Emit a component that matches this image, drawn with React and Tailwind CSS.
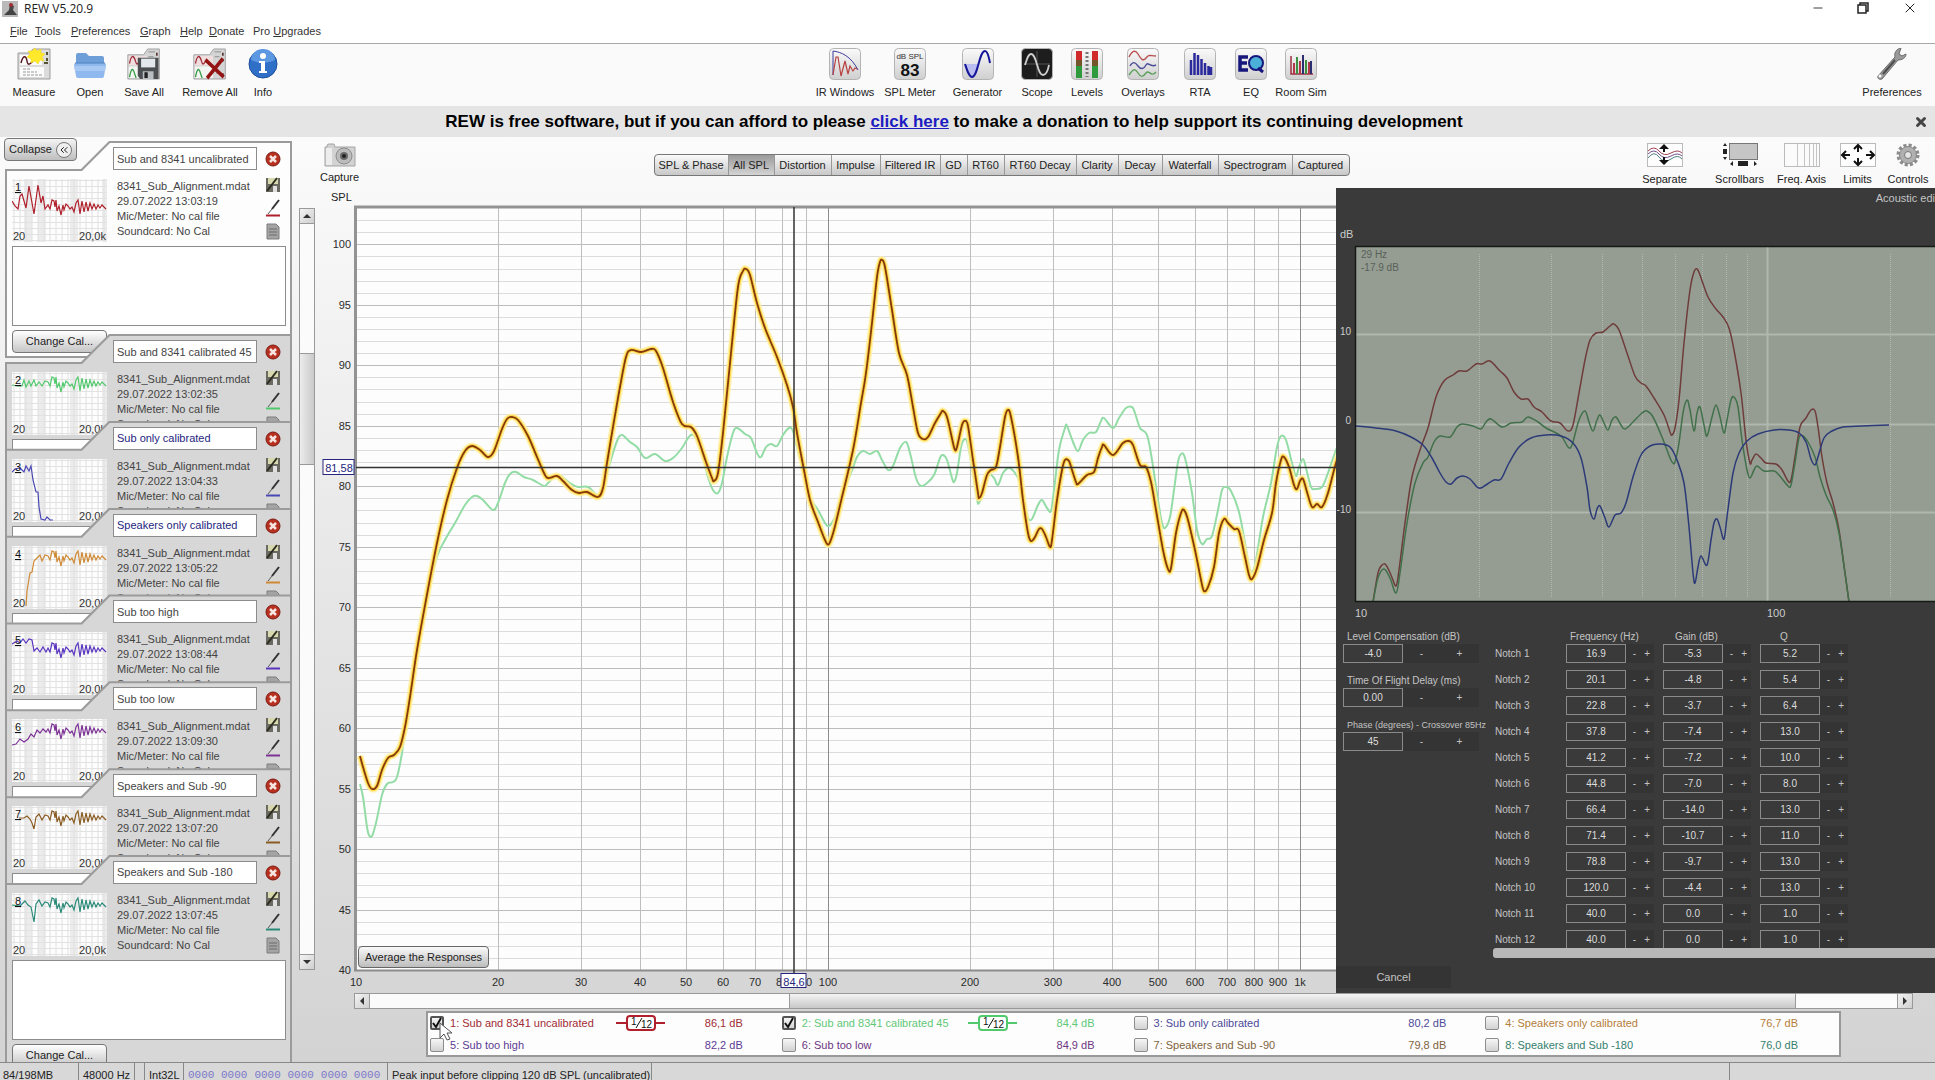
import React from 'react';
import { Minus, X, ChevronsLeft } from 'lucide-react';
import clsx from 'clsx';

const measurements = [
  { id: 1, name: 'Sub and 8341 uncalibrated', date: '29.07.2022 13:03:19', color: '#b0202c', text: 'text-[#a02c34]', level: '86,1 dB', smoothing: true, shift: 16, head: '0,22 3,27 6,30 8,17 10,15 14,29 17,7 22,35 26,6 29,24 31,17 33,30' },
  { id: 2, name: 'Sub and 8341 calibrated 45', date: '29.07.2022 13:02:35', color: '#52c96c', text: 'text-[#62c878]', level: '84,4 dB', smoothing: true, shift: 0, head: '0,13 6,14 10,14 12,8 14,15 17,9 19,14 22,8 24,14 27,10 30,14 33,9' },
  { id: 3, name: 'Sub only calibrated', date: '29.07.2022 13:04:33', color: '#4a48b4', text: 'text-[#4c4a98]', level: '80,2 dB', navy: true, head: '0,13 3,10 8,9 12,13 14,7 17,12 19,7 21,21 24,33 26,33 27,48 29,60 33,61 35,58 38,61 41,61' },
  { id: 4, name: 'Speakers only calibrated', date: '29.07.2022 13:05:22', color: '#cf8a35', text: 'text-[#b57e3c]', level: '76,7 dB', navy: true, shift: 0, head: '14,60 15,45 18,27 20,26 22,15 25,12 28,9 30,15 33,9' },
  { id: 5, name: 'Sub too high', date: '29.07.2022 13:08:44', color: '#5a35c0', text: 'text-[#5c3a94]', level: '82,2 dB', shift: 6, head: '0,12 5,9 8,11 11,7 14,11 17,7 20,8 22,19 25,16 28,20 31,15 34,20' },
  { id: 6, name: 'Sub too low', date: '29.07.2022 13:09:30', color: '#7d3396', text: 'text-[#6c3482]', level: '84,9 dB', shift: 0, head: '0,26 4,25 8,20 12,23 16,20 19,15 22,18 25,11 28,14 31,10 34,13' },
  { id: 7, name: 'Speakers and Sub -90', date: '29.07.2022 13:07:20', color: '#8a5c22', text: 'text-[#80633c]', level: '79,8 dB', shift: 0, head: '7,12 12,12 15,10 18,13 20,17 22,23 24,11 27,8 30,14 33,9' },
  { id: 8, name: 'Speakers and Sub -180', date: '29.07.2022 13:07:45', color: '#2a8a78', text: 'text-[#34806e]', level: '76,0 dB', shift: 0, head: '0,12 8,13 13,8 16,12 19,14 22,29 24,11 27,7 30,13 33,9' }
];

// High frequency part is nearly the same in every thumbnail
const thumbTail = [
  [36, 10], [38, 14], [40, 5], [42, 6], [43, 12], [44, 5], [45, 16], [47, 11], [49, 20], [51, 10], [52, 15], [54, 9],
  [56, 11], [58, 14], [60, 12], [62, 17], [64, 8], [66, 5], [68, 19], [70, 6], [72, 17], [74, 7], [76, 16], [78, 8],
  [80, 14], [82, 9], [84, 14], [86, 10], [88, 13], [90, 10], [94, 14]
];

const uncalibratedCurve = [
  [40, 566], [43, 577], [48, 593], [52, 599], [57, 596], [62, 580], [68, 568], [74, 565], [80, 557], [85, 537], [90, 507],
  [97, 460], [106, 410], [117, 353], [127, 310], [137, 278], [145, 261], [152, 256], [160, 260], [168, 267], [174, 261],
  [182, 239], [187, 229], [192, 227], [198, 230], [208, 246], [217, 267], [224, 283], [228, 288], [237, 286], [243, 291],
  [252, 300], [259, 303], [267, 302], [278, 307], [283, 298], [287, 273], [293, 237], [300, 197], [306, 167], [311, 160],
  [321, 162], [331, 159], [336, 161], [343, 178], [353, 212], [362, 234], [371, 237], [377, 246], [386, 272], [392, 288],
  [394, 291], [398, 283], [403, 243], [411, 163], [418, 97], [423, 81], [426, 79], [430, 85], [437, 113], [445, 138],
  [457, 167], [467, 195], [473, 217], [477, 243], [484, 280], [490, 310], [498, 332], [505, 350], [509, 354], [514, 340],
  [522, 307], [533, 260], [541, 213], [546, 183], [552, 133], [557, 87], [560, 72], [562, 70], [565, 77], [572, 120],
  [579, 163], [587, 185], [593, 217], [598, 243], [603, 249], [608, 247], [615, 233], [621, 223], [623, 221], [627, 227],
  [633, 253], [635, 260], [637, 257], [642, 235], [645, 231], [648, 236], [653, 270], [658, 303], [659, 308], [662, 303],
  [667, 285], [671, 280], [676, 277], [680, 257], [685, 227], [688, 220], [691, 227], [698, 267], [703, 310], [708, 343],
  [711, 351], [715, 347], [719, 339], [722, 339], [726, 347], [730, 357], [732, 350], [737, 310], [742, 280], [745, 270],
  [749, 271], [752, 280], [756, 292], [758, 294], [767, 285], [774, 282], [778, 268], [782, 257], [784, 255], [793, 265],
  [803, 253], [809, 251], [813, 255], [820, 275], [826, 277], [831, 292], [836, 320], [843, 360], [848, 379], [851, 378],
  [856, 343], [861, 323], [864, 320], [868, 330], [875, 360], [881, 390], [884, 401], [888, 397], [894, 377], [899, 343],
  [904, 329], [908, 333], [914, 339], [919, 341], [925, 367], [929, 385], [932, 389], [937, 378], [944, 350], [952, 323],
  [956, 293], [961, 270], [964, 267], [969, 277], [974, 295], [977, 299], [980, 291], [983, 289], [987, 302], [992, 317],
  [997, 314], [1002, 317], [1008, 303], [1016, 273], [1024, 250]
];

const calibratedCurve = [
  [40, 594], [43, 607], [47, 637], [49, 645], [52, 646], [56, 633], [62, 605], [67, 594], [73, 592], [77, 587], [82, 563],
  [85, 540], [90, 510], [97, 463], [106, 413], [117, 367], [125, 350], [135, 333], [145, 315], [152, 307], [157, 306],
  [163, 310], [173, 320], [178, 313], [185, 293], [190, 284], [196, 282], [204, 287], [213, 290], [224, 296], [228, 293],
  [238, 285], [250, 293], [258, 297], [268, 297], [277, 305], [282, 300], [290, 273], [297, 251], [302, 245], [310, 252],
  [317, 257], [325, 268], [335, 264], [345, 271], [353, 268], [362, 258], [368, 248], [373, 245], [380, 257], [388, 287],
  [393, 300], [398, 303], [402, 293], [407, 267], [413, 243], [417, 238], [425, 244], [431, 248], [437, 263], [441, 267],
  [446, 257], [451, 254], [457, 256], [463, 245], [469, 238], [473, 241], [477, 257], [484, 283], [490, 307], [498, 320],
  [505, 333], [509, 336], [515, 327], [521, 307], [531, 283], [537, 267], [543, 261], [550, 264], [557, 261], [562, 270],
  [568, 280], [573, 276], [580, 258], [586, 252], [590, 263], [596, 288], [601, 296], [607, 293], [614, 285], [620, 268],
  [623, 265], [627, 270], [632, 288], [634, 292], [637, 283], [641, 257], [645, 249], [648, 255], [653, 283], [657, 309],
  [659, 313], [664, 300], [669, 285], [674, 288], [678, 295], [683, 283], [689, 278], [695, 283], [700, 293], [705, 315],
  [708, 328], [712, 329], [718, 315], [722, 310], [727, 318], [731, 321], [734, 300], [739, 260], [745, 238], [747, 236],
  [753, 252], [758, 261], [763, 250], [769, 243], [776, 242], [781, 231], [784, 228], [793, 238], [799, 228], [806, 218],
  [812, 217], [815, 223], [820, 238], [827, 245], [832, 270], [838, 310], [842, 333], [845, 338], [850, 327], [854, 300],
  [858, 272], [861, 264], [865, 268], [872, 303], [877, 340], [882, 354], [887, 349], [892, 346], [898, 320], [902, 300],
  [906, 297], [911, 301], [919, 322], [925, 353], [930, 380], [935, 375], [943, 327], [951, 293], [957, 257], [961, 246],
  [966, 250], [972, 273], [976, 286], [979, 277], [983, 269], [986, 278], [991, 297], [995, 299], [1002, 297], [1008, 283],
  [1016, 260], [1024, 240]
];

const editorResponse = [
  [37, 414], [42, 385], [46, 377], [50, 377], [55, 387], [60, 398], [63, 382], [69, 335], [76, 289], [85, 259], [92, 240],
  [100, 209], [108, 193], [117, 187], [123, 183], [131, 183], [140, 176], [146, 176], [154, 173], [164, 183], [171, 190],
  [178, 204], [185, 211], [192, 211], [198, 219], [206, 224], [215, 233], [224, 235], [232, 243], [237, 237], [243, 205],
  [249, 172], [254, 152], [260, 145], [267, 144], [274, 138], [278, 136], [283, 142], [291, 165], [299, 188], [305, 195],
  [310, 198], [318, 210], [328, 227], [334, 244], [336, 247], [339, 240], [343, 212], [348, 155], [354, 102], [358, 84],
  [361, 81], [364, 87], [372, 109], [380, 121], [387, 129], [393, 140], [398, 162], [405, 205], [410, 252], [414, 275],
  [416, 272], [420, 266], [425, 270], [430, 275], [440, 276], [446, 282], [452, 293], [455, 292], [459, 269], [464, 239],
  [470, 230], [475, 222], [479, 223], [482, 239], [486, 269], [491, 295], [497, 315], [503, 342], [509, 385], [513, 414]
];

const editorResult = [
  [37, 414], [42, 390], [48, 381], [54, 390], [60, 405], [64, 385], [71, 335], [79, 295], [87, 275], [92, 269], [98, 254],
  [104, 248], [114, 249], [121, 239], [126, 236], [137, 238], [145, 241], [150, 234], [155, 231], [166, 239], [175, 235],
  [186, 234], [192, 229], [202, 234], [210, 240], [225, 248], [232, 259], [236, 257], [243, 232], [249, 223], [253, 234],
  [257, 243], [261, 232], [264, 227], [268, 235], [272, 242], [276, 232], [280, 229], [285, 237], [289, 241], [297, 234],
  [306, 225], [311, 223], [317, 229], [326, 249], [334, 270], [337, 275], [339, 274], [343, 255], [347, 225], [351, 212],
  [354, 222], [358, 243], [361, 225], [364, 219], [368, 237], [371, 248], [376, 229], [380, 217], [384, 229], [388, 245],
  [391, 232], [395, 212], [398, 209], [402, 219], [406, 252], [411, 282], [414, 290], [418, 282], [421, 278], [428, 283],
  [438, 283], [443, 287], [452, 298], [455, 297], [459, 275], [463, 250], [467, 248], [472, 254], [479, 269], [484, 289],
  [490, 307], [497, 322], [503, 345], [509, 385], [513, 414]
];

const editorFilter = [
  [19, 238], [40, 240], [60, 243], [75, 249], [87, 257], [96, 270], [104, 285], [110, 294], [115, 296], [121, 290],
  [127, 288], [134, 291], [141, 299], [145, 300], [150, 297], [158, 292], [165, 291], [173, 275], [183, 259], [195, 250],
  [210, 247], [225, 248], [237, 255], [245, 270], [251, 299], [254, 322], [258, 331], [261, 321], [264, 318], [269, 330],
  [273, 339], [279, 327], [285, 325], [290, 315], [297, 289], [305, 267], [314, 258], [324, 256], [334, 259], [341, 272],
  [348, 295], [353, 339], [357, 385], [359, 395], [362, 379], [365, 368], [371, 377], [375, 352], [378, 335], [381, 331],
  [384, 339], [388, 351], [391, 329], [397, 285], [403, 265], [411, 253], [422, 246], [438, 242], [453, 242], [463, 245],
  [470, 254], [475, 271], [479, 277], [482, 269], [488, 250], [496, 243], [507, 239], [526, 238], [553, 237]
];

// Catmull-Rom spline through the points
const smooth = (pts) => {
  let d = `M${pts[0][0]} ${pts[0][1]}`;
  for (let i = 0; i < pts.length - 1; i++) {
    const p0 = pts[i - 1] || pts[i];
    const p1 = pts[i];
    const p2 = pts[i + 1];
    const p3 = pts[i + 2] || p2;
    const c = [
      p1[0] + (p2[0] - p0[0]) / 6, p1[1] + (p2[1] - p0[1]) / 6,
      p2[0] - (p3[0] - p1[0]) / 6, p2[1] - (p3[1] - p1[1]) / 6
    ].map((v) => v.toFixed(1));
    d += `C${c[0]} ${c[1]} ${c[2]} ${c[3]} ${p2[0]} ${p2[1]}`;
  }
  return d;
};

const notches = [
  ['16.9', '-5.3', '5.2'],
  ['20.1', '-4.8', '5.4'],
  ['22.8', '-3.7', '6.4'],
  ['37.8', '-7.4', '13.0'],
  ['41.2', '-7.2', '10.0'],
  ['44.8', '-7.0', '8.0'],
  ['66.4', '-14.0', '13.0'],
  ['71.4', '-10.7', '11.0'],
  ['78.8', '-9.7', '13.0'],
  ['120.0', '-4.4', '13.0'],
  ['40.0', '0.0', '1.0'],
  ['40.0', '0.0', '1.0']
];

/* ---------- icons ---------- */

const Tile = ({ children, dark }) => (
  <svg width="32" height="32" viewBox="0 0 32 32">
    <defs>
      <linearGradient id="tile" x1="0" y1="0" x2="0" y2="1">
        <stop offset="0" stopColor="#fafafa" />
        <stop offset="1" stopColor="#cfcfcf" />
      </linearGradient>
    </defs>
    <rect x="0.5" y="0.5" width="31" height="31" rx="4" fill={dark ? '#1d1d1d' : 'url(#tile)'} stroke="#b4b4b4" />
    {children}
  </svg>
);

const SheetBase = () => (
  <>
    <path d="M1 7h19l5-6h14v31H1z" fill="#d4d4d4" stroke="#9c9c9c" />
    <path d="M2 8h22v10H2z" fill="#f0dede" />
    <path d="M2 19h22v12H2z" fill="#f2f5f2" />
    <path d="M3 16c2-9 5-9 7-3s3 3 5 1" fill="none" stroke="#9c2a36" strokeWidth="1.5" />
    <path d="M3 30c2-9 4-10 6-4l2 5" fill="none" stroke="#2e9a3e" strokeWidth="1.5" />
    <path d="M26 4h8M26 9h6M28 26h6" stroke="#888" />
    <path d="M36 5v3M36 11v3M36 26v4" stroke="#5a3434" strokeWidth="2" />
  </>
);

const MeasureIcon = () => (
  <svg width="34" height="32" viewBox="0 0 34 32">
    <path d="M1 5h12l3-4h17v30H1z" fill="#dcdcdc" stroke="#9c9c9c" />
    <path d="M3 19h24v10H3zM3 7h22v10H3z" fill="#fbfbfb" />
    <path d="M4 15c2-8 5-8 6-2s4 2 6 0" fill="none" stroke="#5a1c24" strokeWidth="1.5" />
    <path d="M6 21h7M6 24h14M6 27h20" stroke="#999" strokeDasharray="3 1" />
    <path d="M30 4v3M30 10v3M27 15h4" stroke="#553" strokeWidth="2" />
    <path d="M18 0l2 3 4-2 0 4 4 1-3 3 2 4-4-1-2 4-3-3-4 2 0-4-4-2 3-3-2-3 4 0z" fill="#ffe92a" stroke="#f2d21a" strokeWidth="0.5" />
  </svg>
);

const OpenIcon = () => (
  <svg width="34" height="32" viewBox="0 0 34 32">
    <path d="M3 7q0-2 2-2h8l3 3h13q2 0 2 2v8H3z" fill="#6f9fd8" />
    <path d="M1 17q0-2 2-2h28q2 0 2 2l-2 11q0 2-2 2H5q-2 0-2-2z" fill="#8fb8ee" />
    <path d="M1 18h32l-1 5H2z" fill="#a9c9f5" />
    <path d="M2 15h30" stroke="#4f80c0" />
  </svg>
);

const SaveAllIcon = () => (
  <svg width="34" height="32" viewBox="0 0 41 33" preserveAspectRatio="none">
    <SheetBase />
    <path d="M13 10h25v22H16l-3-3z" fill="#4b4f52" />
    <path d="M17 11h17v9H17z" fill="#e3e8ec" />
    <path d="M19 24h13v8H19z" fill="#b9bec2" />
    <path d="M21 25h4v6h-4z" fill="#222" />
  </svg>
);

const RemoveAllIcon = () => (
  <svg width="34" height="32" viewBox="0 0 41 33" preserveAspectRatio="none">
    <SheetBase />
    <path d="M15 12l22 18M36 11L17 31" stroke="#941414" strokeWidth="4" />
  </svg>
);

const InfoIcon = () => (
  <svg width="30" height="32" viewBox="0 0 30 32">
    <ellipse cx="15" cy="16" rx="14" ry="14" fill="#2f6fc8" stroke="#1e4f9c" />
    <path d="M3 12a12 11 0 0 1 24 0q-12 6-24 0z" fill="#5c97e2" />
    <circle cx="15" cy="8" r="3" fill="#fff" />
    <path d="M11 13h6v10h2v2h-8v-2h2v-8h-2z" fill="#fff" />
  </svg>
);

const IrIcon = () => (
  <Tile>
    <path d="M4 27V3c8 1 18 5 25 19" fill="none" stroke="#3c3c9c" />
    <path d="M4 27L7 9l2 0 3 19 4-15 3 13 2-8 3 5 2-3 2 1" fill="none" stroke="#b84040" strokeWidth="1.2" />
  </Tile>
);

const SplIcon = () => (
  <Tile>
    <text x="16" y="11" fontSize="8" textAnchor="middle" fill="#333">dB SPL</text>
    <text x="16" y="28" fontSize="17" fontWeight="bold" textAnchor="middle" fill="#111">83</text>
  </Tile>
);

const GeneratorIcon = () => (
  <Tile>
    <path d="M3 16c2 6 4 13 7 13s5-7 7-13z" fill="#b9bdf0" />
    <path d="M3 16c2 6 4 13 7 13 6 0 7-26 13-26 3 0 4 7 5 12" fill="none" stroke="#15159c" strokeWidth="2" />
  </Tile>
);

const ScopeIcon = () => (
  <Tile dark>
    <path d="M16 3v26M3 16h26" stroke="#555" />
    <path d="M4 17c2-6 3-11 6-11 6 0 6 21 12 21 3 0 5-5 6-10" fill="none" stroke="#cfcfcf" strokeWidth="1.8" />
  </Tile>
);

const LevelsIcon = () => (
  <Tile>
    <path d="M5 3h6v14H5zM21 3h6v14h-6z" fill="#d02a2a" />
    <path d="M5 15h6v15H5zM21 15h6v15h-6z" fill="#2f9a3c" />
    <path d="M5 12h6v6H5zM21 12h6v6h-6z" fill="#74542a" />
    <path d="M16 4v25" stroke="#777" strokeWidth="3" strokeDasharray="2 2" />
  </Tile>
);

const OverlaysIcon = () => (
  <Tile>
    <path d="M2 9c3-6 6-8 9-3s5 8 8 4 4-2 10-2" fill="none" stroke="#b85050" strokeWidth="1.4" />
    <path d="M3 18c3-5 5-4 8 0s6 3 8-1 4 3 10 0" fill="none" stroke="#4c4c98" strokeWidth="1.4" />
    <path d="M2 27c4-6 6-7 9-2s5 4 8 0 5 5 10-1" fill="none" stroke="#5aa05a" strokeWidth="1.4" />
  </Tile>
);

const RtaIcon = () => (
  <Tile>
    <path d="M7 27V12M10.500 27V5M14 27V7M17.500 27V11M21 27V15M24.500 27V18M27 27V19" stroke="#2a2a9c" strokeWidth="2.500" />
  </Tile>
);

const EqIcon = () => (
  <Tile>
    <circle cx="21" cy="15" r="7" fill="#4ab0d8" stroke="#16167c" strokeWidth="2" />
    <path d="M23 20l5 4" stroke="#16167c" strokeWidth="3" />
    <path d="M13 9H5v13h8M5 15h7" fill="none" stroke="#16167c" strokeWidth="3.500" />
  </Tile>
);

const RoomSimIcon = () => (
  <Tile>
    <path d="M6 8v18h22" fill="none" stroke="#a03040" strokeWidth="1.500" />
    <path d="M9 26V15M15 26V13M24 26V14" stroke="#b03848" strokeWidth="2" />
    <path d="M12 26V9M21 26V12" stroke="#3c9040" strokeWidth="2" />
    <path d="M18 26V7M26 26V13" stroke="#2c2c70" strokeWidth="2" />
  </Tile>
);

const WrenchIcon = () => (
  <svg width="32" height="32" viewBox="0 0 32 32">
    <path d="M25 0c-5 1-7 5-6 9L2 28c-1 2 1 4 4 3L22 12c4 0 8-2 8-6l-4 2-3-2 1-3z" fill="#9a9a9a" stroke="#6c6c6c" />
    <path d="M19 12L7 26" stroke="#4c4c4c" strokeWidth="2" />
    <circle cx="4" cy="28" r="1.500" fill="#fff" />
  </svg>
);

const CameraIcon = () => (
  <svg width="32" height="24" viewBox="0 0 32 24">
    <path d="M3 3q0-2 2-2h5l1 3h20v19H1V4h2z" fill="#d2d2d2" stroke="#a4a4a4" />
    <path d="M2 5h6v17H2z" fill="#ededed" />
    <circle cx="20" cy="13" r="8" fill="#bcbcbc" stroke="#8e8e8e" />
    <circle cx="20" cy="13" r="4" fill="#6a6a6a" />
    <circle cx="20" cy="13" r="2" fill="#222" />
  </svg>
);

const SeparateIcon = () => (
  <svg width="36" height="24" viewBox="0 0 36 24">
    <rect x="0.5" y="0.5" width="35" height="23" fill="#fdfdfd" stroke="#bbb" />
    <path d="M1 8q6-6 11 0t12 2 11 0" fill="none" stroke="#a04050" />
    <path d="M1 11q6-6 11 0t12 2 11 0" fill="none" stroke="#705090" />
    <path d="M1 15q6-8 11-1t12 2 11 0" fill="none" stroke="#508080" />
    <path d="M17 1l5 5h-4v3h-2V6h-4zM17 22l5-5h-4v-3h-2v3h-4z" fill="#111" />
  </svg>
);

const ScrollbarsIcon = () => (
  <svg width="36" height="24" viewBox="0 0 36 24">
    <rect x="7.500" y="0.500" width="28" height="16" fill="#c6c6c6" stroke="#777" />
    <path d="M3 0l2 3H1zM3 17l2-3H1zM1 6h4v5H1zM16 18h10v5H16zM11 18v5l-3-2zM32 18v5l3-2z" fill="#222" />
  </svg>
);

const FreqAxisIcon = () => (
  <svg width="36" height="24" viewBox="0 0 36 24">
    <rect x="0.500" y="0.500" width="35" height="23" fill="#fbfbfb" stroke="#bbb" />
    <path d="M13.500 1v22M20.500 1v22M25.500 1v22M29.500 1v22M32.500 1v22" stroke="#c4c4c4" />
  </svg>
);

const LimitsIcon = () => (
  <svg width="36" height="24" viewBox="0 0 36 24">
    <rect x="0.500" y="0.500" width="35" height="23" fill="#fdfdfd" stroke="#bbb" />
    <path d="M18 2v7M18 15v7M3 12h7M33 12h-7" stroke="#111" strokeWidth="2" />
    <path d="M14 6l4-4 4 4M14 18l4 4 4-4M6 8l-4 4 4 4M30 8l4 4-4 4" fill="none" stroke="#111" strokeWidth="2" />
  </svg>
);

const GearIcon = () => (
  <svg width="24" height="24" viewBox="0 0 24 24">
    <circle cx="12" cy="12" r="9.500" fill="none" stroke="#8c8c8c" strokeWidth="4" strokeDasharray="3 2" />
    <circle cx="12" cy="12" r="8.500" fill="#b0b0b0" stroke="#888" />
    <circle cx="12" cy="12" r="3.500" fill="#e6e6e6" stroke="#777" />
  </svg>
);

const RemoveIcon = () => (
  <svg width="16" height="16" viewBox="0 0 16 16">
    <circle cx="8" cy="8" r="7" fill="#b83020" stroke="#7c1c14" />
    <path d="M5 5l6 6M11 5l-6 6" stroke="#f6e6e2" strokeWidth="2.500" />
  </svg>
);

const DiskPenIcon = () => (
  <svg width="16" height="16" viewBox="0 0 16 16">
    <path d="M1 1h14v14H1z" fill="#6a6a62" />
    <path d="M3 1h10v6H3z" fill="#d8d8ae" />
    <path d="M8 9h4v6H8z" fill="#e0e0e0" />
    <path d="M2 14L12 1" stroke="#2c2c20" strokeWidth="2" />
  </svg>
);

const TraceColourIcon = ({ color }) => (
  <svg width="16" height="18" viewBox="0 0 16 18">
    <path d="M14 1L7 10" stroke="#333" strokeWidth="2" />
    <path d="M7 10l-4 5" stroke="#555" />
    <path d="M1 16.500h14" stroke={color} strokeWidth="2" />
  </svg>
);

const NotesIcon = () => (
  <svg width="14" height="17" viewBox="0 0 14 17">
    <path d="M1 1h9l3 3v12H1z" fill="#a4a4a4" stroke="#7c7c7c" />
    <path d="M3 6h8M3 9h8M3 12h8" stroke="#6a6a6a" />
  </svg>
);

const RewLogo = () => (
  <svg width="16" height="16" viewBox="0 0 16 16">
    <rect width="16" height="16" fill="#b9b9b9" />
    <path d="M2 14l5-5 1-6 4 2-1 4 4 5z" fill="#444" />
    <circle cx="9" cy="4" r="2" fill="#a02c34" />
  </svg>
);

/* ---------- top bars ---------- */

const menus = [
  { key: 'F', rest: 'ile', width: 'w-[25px]' },
  { key: 'T', rest: 'ools', width: 'w-9' },
  { key: 'P', rest: 'references', width: 'w-[69px]' },
  { key: 'G', rest: 'raph', width: 'w-10' },
  { key: 'H', rest: 'elp', width: 'w-[29px]' },
  { key: 'D', rest: 'onate', width: 'w-11' },
  { before: 'Pro ', key: 'U', rest: 'pgrades', width: 'w-20' }
];

const fileTools = [
  { label: 'Measure', icon: MeasureIcon, width: 'w-[60px]' },
  { label: 'Open', icon: OpenIcon, width: 'w-[52px]' },
  { label: 'Save All', icon: SaveAllIcon, width: 'w-14' },
  { label: 'Remove All', icon: RemoveAllIcon, width: 'w-[76px]' },
  { label: 'Info', icon: InfoIcon, width: 'w-[30px]' }
];

const mainTools = [
  { label: 'IR Windows', icon: IrIcon, width: 'w-16' },
  { label: 'SPL Meter', icon: SplIcon, width: 'w-[66px]' },
  { label: 'Generator', icon: GeneratorIcon, width: 'w-[69px]' },
  { label: 'Scope', icon: ScopeIcon, width: 'w-[50px]' },
  { label: 'Levels', icon: LevelsIcon, width: 'w-[50px]' },
  { label: 'Overlays', icon: OverlaysIcon, width: 'w-[62px]' },
  { label: 'RTA', icon: RtaIcon, width: 'w-[52px]' },
  { label: 'EQ', icon: EqIcon, width: 'w-[50px]' },
  { label: 'Room Sim', icon: RoomSimIcon, width: 'w-[50px]' }
];

const graphTools = [
  { label: 'Separate', icon: SeparateIcon, width: 'w-[81px]' },
  { label: 'Scrollbars', icon: ScrollbarsIcon, width: 'w-[69px]' },
  { label: 'Freq. Axis', icon: FreqAxisIcon, width: 'w-[55px]' },
  { label: 'Limits', icon: LimitsIcon, width: 'w-[57px]' },
  { label: 'Controls', icon: GearIcon, width: 'w-11' }
];

const tabs = [
  { label: 'SPL & Phase', width: 'w-[74px]' },
  { label: 'All SPL', width: 'w-[46px]' },
  { label: 'Distortion', width: 'w-[57px]' },
  { label: 'Impulse', width: 'w-[49px]' },
  { label: 'Filtered IR', width: 'w-[60px]' },
  { label: 'GD', width: 'w-[27px]' },
  { label: 'RT60', width: 'w-[37px]' },
  { label: 'RT60 Decay', width: 'w-[72px]' },
  { label: 'Clarity', width: 'w-[42px]' },
  { label: 'Decay', width: 'w-11' },
  { label: 'Waterfall', width: 'w-14' },
  { label: 'Spectrogram', width: 'w-[74px]' },
  { label: 'Captured', width: 'w-14' }
];

const ToolButton = ({ label, icon: Icon, width }) => (
  <button className={clsx('flex flex-col items-center gap-[5px] whitespace-nowrap', width)}>
    <Icon />
    <span className="leading-[14px]">{label}</span>
  </button>
);

const TopBars = () => (
  <header className="shrink-0">
    <div className="flex h-[22px] items-start justify-between bg-white pl-[2px]">
      <div className="flex items-center gap-[6px] font-['Open_Sans',sans-serif] text-xs leading-[18px] text-[#222]">
        <RewLogo />
        <span>REW V5.20.9</span>
      </div>
      <div className="flex text-[#222]">
        <button aria-label="Minimize" className="flex h-4 w-[45px] items-center justify-center"><Minus size={14} strokeWidth={1.5} /></button>
        <button aria-label="Restore" className="flex h-4 w-[45px] items-center justify-center">
          <svg width="12" height="12" viewBox="0 0 12 12" fill="none" stroke="currentColor" strokeWidth="1.500">
            <path d="M1 3h8v8H1zM3 3V1h8v8H9" />
          </svg>
        </button>
        <button aria-label="Close" className="flex h-4 w-[50px] items-center justify-center"><X size={16} strokeWidth={1.5} /></button>
      </div>
    </div>
    <nav className="flex h-[21px] items-start bg-white pl-[10px] text-[#333]">
      {menus.map((menu) => (
        <button key={menu.key} className={clsx('text-left leading-[18px]', menu.width)}>
          {menu.before}<span className="underline">{menu.key}</span>{menu.rest}
        </button>
      ))}
    </nav>
    <div className="flex h-[63px] items-start justify-between border-t border-[#a8a8a8] bg-[#fafafa] pt-1 text-[#222]">
      <div className="flex pr-3 pl-1">
        {fileTools.map((tool) => <ToolButton key={tool.label} {...tool} />)}
      </div>
      <div className="flex">
        {mainTools.map((tool) => <ToolButton key={tool.label} {...tool} />)}
      </div>
      <ToolButton label="Preferences" icon={WrenchIcon} width="w-[86px]" />
    </div>
    <div className="flex h-[31px] items-center bg-[#e5e5e5]">
      <p className="flex-1 pr-[6px] text-center text-[17px] leading-6 font-bold text-black">
        REW is free software, but if you can afford to please <a href="#donate" className="text-[#1c1cc0] underline">click here</a> to make a donation to help support its continuing development
      </p>
      <button aria-label="Close banner" className="mr-[7px] text-[#444]"><X size={14} strokeWidth={5} /></button>
    </div>
  </header>
);

/* ---------- measurement list ---------- */

const Thumbnail = ({ id, head, shift, color }) => {
  const tail = shift === undefined ? '' : thumbTail.map(([x, y]) => `${x},${y + shift}`).join(' ');
  return (
    <svg width="95" height="63" viewBox="0 0 95 63" className="bg-[#fdfdfd]">
      {[0, 14, 46, 78].map((x) => (
        <rect key={x} x={x + 12} y="0" width="8" height="63" fill="#ececec" />
      ))}
      {Array.from({ length: 16 }, (_, i) => (
        <path key={i} d={`M${i * 6 + 2} 0v63`} stroke="#e0e0e0" />
      ))}
      {Array.from({ length: 11 }, (_, i) => (
        <path key={i} d={`M0 ${i * 6 + 1.5}h95`} stroke="#e2e2e2" />
      ))}
      <polyline points={`${head} ${tail}`} fill="none" stroke={color} strokeWidth="1.200" />
      <text x="3" y="12" fontSize="11" fill="#111" textDecoration="underline">{id}</text>
      <text x="1" y="61" fontSize="11" fill="#333">20</text>
      <text x="94" y="61" fontSize="11" fill="#333" textAnchor="end">20,0k</text>
    </svg>
  );
};

const MeasurementCard = ({ item, active }) => (
  <div className="h-[217px] w-[287px] bg-[#9b9b9b] p-[2px] [clip-path:polygon(0_28px,76px_28px,104px_0,100%_0,100%_100%,0_100%)]">
    <div
      className={clsx(
        'h-full px-[5px] [clip-path:polygon(0_28px,75px_28px,103px_0,100%_0,100%_100%,0_100%)]',
        active ? 'bg-[#fdfdfd]' : 'bg-[#d7d7d7]'
      )}
    >
      <div className="flex h-[103px]">
        <div className="mt-9 w-[95px] shrink-0">
          <Thumbnail {...item} />
        </div>
        <div className="mt-1 ml-[6px] w-36 text-[#444]">
          <input
            aria-label={`Name of measurement ${item.id}`}
            defaultValue={item.name}
            className={clsx('h-[23px] w-full border border-[#8c8c8c] bg-white px-[3px]', item.navy && 'text-[#1e1e80]')}
          />
          <div className="mt-[9px] pl-1 leading-[15px] whitespace-nowrap">
            <p>8341_Sub_Alignment.mdat</p>
            <p>{item.date}</p>
            <p>Mic/Meter: No cal file</p>
            <p>Soundcard: No Cal</p>
          </div>
        </div>
        <div className="mt-2 ml-2 flex w-4 flex-col items-center gap-[6px]">
          <button aria-label="Remove measurement" className="mb-1"><RemoveIcon /></button>
          <button aria-label="Save measurement"><DiskPenIcon /></button>
          <button aria-label="Trace colour"><TraceColourIcon color={item.color} /></button>
          <button aria-label="Notes"><NotesIcon /></button>
        </div>
      </div>
      <textarea aria-label={`Notes of measurement ${item.id}`} className="block h-20 w-[274px] resize-none border border-[#8c8c8c] bg-white" />
      <button className="mt-1 h-[23px] w-[95px] rounded-[4px] border border-[#777] bg-linear-to-b from-white to-[#c6c6c6] text-[#222]">
        Change Cal...
      </button>
    </div>
  </div>
);

const arrowButton = 'flex shrink-0 items-center justify-center border border-[#999] bg-linear-to-br from-[#f4f4f4] to-[#cfcfcf] text-[#333]';

const Arrow = ({ d }) => (
  <svg width="8" height="8" viewBox="0 0 8 8"><path d={d} fill="currentColor" /></svg>
);

const Sidebar = () => (
  <aside className="relative flex w-80 shrink-0 overflow-hidden pl-[5px]">
    <div className="mt-1 flex w-[287px] flex-col">
      {measurements.map((item) => (
        <div
          key={item.id}
          className={clsx('min-h-0', item.id === 1 && 'h-[193px]', item.id > 1 && item.id < 8 && 'flex-1', item.id === 8 && 'h-[207px]')}
        >
          <MeasurementCard item={item} active={item.id === 1} />
        </div>
      ))}
    </div>
    <button className="absolute top-px left-1 flex h-[23px] w-[73px] items-center justify-center gap-1 rounded-[4px] border border-[#777] bg-linear-to-b from-[#f4f4f4] to-[#bfbfbf] text-[#222]">
      Collapse
      <span className="flex h-4 w-4 items-center justify-center rounded-full border border-[#777] bg-[#eee]">
        <ChevronsLeft size={12} strokeWidth={2} />
      </span>
    </button>
    <div className="mt-[71px] mb-[92px] ml-[7px] flex w-4 flex-col">
      <button aria-label="Scroll up" className={clsx('h-4', arrowButton)}><Arrow d="M0 6h8L4 2z" /></button>
      <div className="flex flex-1 flex-col border-x border-[#999] bg-[#fbfbfb]">
        <div className="flex-[129]" />
        <div className="flex-[111] border-y border-[#999] bg-linear-to-r from-[#ececec] to-[#cacaca]" />
        <div className="flex-[490]" />
      </div>
      <button aria-label="Scroll down" className={clsx('h-4', arrowButton)}><Arrow d="M0 2h8L4 6z" /></button>
    </div>
  </aside>
);

/* ---------- SPL graph ---------- */

const LEFT = 36;
const DECADE = 472.3;
const freqX = (f) => LEFT + DECADE * Math.log10(f / 10);
const splY = (db) => 780 - 12.094 * (db - 40);

const freqs = [20, 30, 40, 50, 60, 70, 80, 90, 100, 200, 300, 400, 500, 600, 700, 800, 900, 1000, 2000, 3000, 4000, 5000, 6000, 7000, 8000, 9000, 10000];

const SplChart = () => (
  <svg className="h-full w-full text-[#2c2c2c]" fontSize="11">
    <text x="11" y="11" fill="#222">SPL</text>
    <rect x={LEFT} y="17" width="1557" height="763" fill="#fdfdfd" />
    {Array.from({ length: 63 }, (_, i) => 41 + i).filter((db) => db < 103).map((db) => (
      <path key={db} d={`M${LEFT} ${Math.round(splY(db)) + 0.5}h1557`} stroke={db % 5 === 0 ? '#bcbcbc' : '#dcdcdc'} />
    ))}
    {freqs.map((f) => (
      <path key={f} d={`M${Math.floor(freqX(f)) + 0.5} 17v763`} stroke={[100, 1000, 10000].includes(f) ? '#8c8c8c' : '#bebebe'} />
    ))}
    <path d="M35.500 780V17h1558" fill="none" stroke="#939393" strokeWidth="3" />
    <path d="M34 780.500h1559" stroke="#8c8c8c" strokeWidth="2" />
    <path d={smooth(calibratedCurve)} fill="none" stroke="#94dca6" strokeWidth="2" />
    <path d={smooth(uncalibratedCurve)} fill="none" stroke="#fff0a0" strokeWidth="7" strokeLinejoin="round" opacity="0.8" />
    <path d={smooth(uncalibratedCurve)} fill="none" stroke="#ffd84a" strokeWidth="4" strokeLinejoin="round" />
    <path d={smooth(uncalibratedCurve)} fill="none" stroke="#84380c" strokeWidth="1.800" strokeLinejoin="round" />
    <path d="M36 277.500h1557M474 17v766" stroke="#333" strokeWidth="1.500" />
    {[100, 95, 90, 85, 80, 75, 70, 65, 60, 55, 50, 45, 40].map((db) => (
      <text key={db} x="31" y={Math.round(splY(db)) + 4} textAnchor="end" fill="currentColor">{db}</text>
    ))}
    {[10, 20, 30, 40, 50, 60, 70, 80, 90, 100, 200, 300, 400, 500, 600, 700, 800, 900].map((f) => (
      <text key={f} x={Math.floor(freqX(f))} y="796" textAnchor="middle" fill="currentColor">{f}</text>
    ))}
    <text x={Math.floor(freqX(1000))} y="796" textAnchor="middle" fill="currentColor">1k</text>
    <rect x="3" y="269.500" width="31" height="15" fill="#fff" stroke="#26267c" />
    <text x="19" y="282" textAnchor="middle" fill="#26267c">81,58</text>
    <rect x="461" y="783.500" width="25" height="14" fill="#fff" stroke="#26267c" />
    <text x="474" y="796" textAnchor="middle" fill="#26267c">84,6</text>
  </svg>
);

const Smoothing = ({ color }) => (
  <svg width="49" height="18" viewBox="0 0 49 18">
    <path d="M0 9h12M38 9h11" stroke={color} strokeWidth="2" />
    <rect x="11" y="2" width="28" height="14" rx="3" fill="#fff" stroke={color} strokeWidth="2" />
    <text x="15" y="11" fontSize="10" fill="#111">1</text>
    <path d="M20 14l6-10" stroke="#111" />
    <text x="25" y="14" fontSize="10" fill="#111">12</text>
  </svg>
);

const LegendItem = ({ item }) => (
  <div className={clsx('flex h-5 items-center pr-[39px]', item.text)}>
    <input
      type="checkbox"
      id={`trace-${item.id}`}
      defaultChecked={item.smoothing}
      className="peer h-[14px] w-[14px] shrink-0 appearance-none rounded-[2px] border border-[#8c8c8c] bg-linear-to-b from-[#f6f6f6] to-[#d2d2d2] checked:border-2 checked:border-[#555]"
    />
    <svg width="14" height="14" viewBox="0 0 14 14" className="pointer-events-none relative -ml-[14px] hidden shrink-0 peer-checked:block">
      <path d="M3 7l3 4 5-9" fill="none" stroke="#111" strokeWidth="2" />
    </svg>
    <label htmlFor={`trace-${item.id}`} className="w-[172px] shrink-0 pl-[6px] whitespace-nowrap">{item.id}: {item.name}</label>
    {item.smoothing && <Smoothing color={item.color} />}
    <span className="flex-1 text-right">{item.level}</span>
  </div>
);

const GraphArea = () => (
  <section className="flex min-w-0 flex-1 flex-col">
    <div className="flex h-[53px] shrink-0 justify-between text-[#222]">
      <button className="mt-[6px] mr-5 flex w-[39px] flex-col items-center gap-[3px] self-start">
        <CameraIcon />
        <span className="leading-[14px]">Capture</span>
      </button>
      <div role="tablist" className="mt-[17px] flex h-[22px] self-start rounded-[4px] border border-[#777] bg-linear-to-b from-[#fafafa] to-[#c8c8c8]">
        {tabs.map((tab) => (
          <button
            key={tab.label}
            role="tab"
            aria-selected={tab.label === 'All SPL'}
            className={clsx(
              'box-border border-r border-[#999] text-center whitespace-nowrap last:border-r-0',
              tab.width,
              tab.label === 'All SPL' && 'bg-linear-to-b from-[#9a9a9a] to-[#d4d4d4]'
            )}
          >
            {tab.label}
          </button>
        ))}
      </div>
      <div className="mt-[6px] flex self-start pr-[5px]">
        {graphTools.map((tool) => <ToolButton key={tool.label} {...tool} />)}
      </div>
    </div>
    <div className="relative min-h-0 flex-1">
      <SplChart />
      <button className="absolute top-[756px] left-[38px] h-[22px] w-[131px] rounded-[4px] border border-[#666] bg-linear-to-b from-[#fafafa] to-[#bdbdbd] text-[#222]">
        Average the Responses
      </button>
    </div>
    <div className="shrink-0 pr-[22px] pb-[5px] pl-[34px]">
      <div className="flex h-4">
        <button aria-label="Scroll left" className={clsx('w-4', arrowButton)}><Arrow d="M6 0v8L2 4z" /></button>
        <div className="flex flex-1 border-y border-[#999] bg-[#fbfbfb]">
          <div className="flex-[420]" />
          <div className="flex-[1007] border-x border-[#999] bg-linear-to-b from-[#f4f4f4] to-[#c8c8c8]" />
          <div className="flex-[101]" />
        </div>
        <button aria-label="Scroll right" className={clsx('w-4', arrowButton)}><Arrow d="M2 0v8l4-4z" /></button>
      </div>
      <div className="relative mx-[72px] mt-[2px] grid grid-cols-4 gap-y-[2px] border-2 border-[#999] bg-[#fdfdfd] px-[2px]">
        {measurements.map((item) => <LegendItem key={item.id} item={item} />)}
        <svg width="14" height="20" viewBox="0 0 14 20" className="absolute top-[9px] left-[11px]">
          <path d="M1 1v15l4-4 3 6 3-1-3-6h5z" fill="#fff" stroke="#555" />
        </svg>
      </div>
    </div>
  </section>
);

/* ---------- acoustic editor ---------- */

const editorX = (f) => 20.2 + 411.5 * Math.log10(f / 10);

const EditorChart = () => (
  <svg className="block h-[404px] w-full" fontSize="10">
    <g transform="translate(0 -28)">
      <text x="4" y="50" fill="#ccc" fontSize="11">dB</text>
      <rect x="19" y="58" width="600" height="356" fill="#959d93" />
      {[20, 30, 40, 50, 60, 70, 80, 90, 200].map((f) => (
        <path key={f} d={`M${Math.floor(editorX(f)) - 0.5} 66v344`} stroke="#b2b8b0" strokeDasharray="1 1" />
      ))}
      <path d="M431.500 59v354M20 146.500h590M20 236.500h590M20 324.500h590" stroke="#b0b7ae" strokeWidth="2" />
      <path d={smooth(editorResponse)} fill="none" stroke="#6e3c3a" strokeWidth="1.500" />
      <path d={smooth(editorResult)} fill="none" stroke="#41704a" strokeWidth="1.500" />
      <path d={smooth(editorFilter)} fill="none" stroke="#2c3a78" strokeWidth="1.500" />
      <path d="M610 58.500H19.500v355h590" fill="none" stroke="#151a15" strokeWidth="1.500" />
      <text x="25" y="70" fill="#586058">29 Hz</text>
      <text x="25" y="83" fill="#586058">-17.9 dB</text>
      <text x="15" y="147" fill="#ccc" textAnchor="end">10</text>
      <text x="15" y="236" fill="#ccc" textAnchor="end">0</text>
      <text x="15" y="325" fill="#ccc" textAnchor="end">-10</text>
      <text x="19" y="429" fill="#ccc" fontSize="11">10</text>
      <text x="431" y="429" fill="#ccc" fontSize="11">100</text>
    </g>
  </svg>
);

const Stepper = ({ label, value, wide }) => (
  <div className="flex h-[19px]">
    <input
      aria-label={label}
      defaultValue={value}
      className="h-full w-[60px] border border-[#8a8a8a] bg-transparent text-center text-[#ddd]"
    />
    <div className={clsx('flex items-center bg-[#343434]', wide ? 'w-[76px] justify-around' : 'w-7 justify-end gap-2 pr-1')}>
      <button aria-label={`Decrease ${label}`}>-</button>
      <button aria-label={`Increase ${label}`}>+</button>
    </div>
  </div>
);

const AcousticEditor = () => (
  <section className="absolute top-[51px] right-0 bottom-[69px] flex w-[599px] flex-col overflow-hidden bg-[#3a3a3a] text-[10px] text-[#c4c4c4]">
    <h2 className="h-7 shrink-0 pt-[3px] text-right text-[11px] leading-[14px]">Acoustic edi</h2>
    <EditorChart />
    <div className="flex pl-[7px]">
      <div className="flex w-[152px] shrink-0 flex-col gap-[11px] pt-[9px]">
        <div>
          <p className="pl-1 leading-[15px]">Level Compensation (dB)</p>
          <Stepper label="Level Compensation (dB)" value="-4.0" wide />
        </div>
        <div>
          <p className="pl-1 leading-[14px]">Time Of Flight Delay (ms)</p>
          <Stepper label="Time Of Flight Delay (ms)" value="0.00" wide />
        </div>
        <div>
          <p className="pl-1 text-[9px] leading-[14px] whitespace-nowrap">Phase (degrees) - Crossover 85Hz</p>
          <Stepper label="Phase (degrees)" value="45" wide />
        </div>
      </div>
      <div className="h-[328px] overflow-hidden">
        <table className="table-fixed border-collapse">
          <thead>
            <tr className="h-6 text-left leading-[15px]">
              <th className="w-[71px]"></th>
              <th className="w-[97px] pt-[9px] pl-1 align-top font-normal">Frequency (Hz)</th>
              <th className="w-[97px] pt-[9px] pl-3 align-top font-normal">Gain (dB)</th>
              <th className="w-[97px] pt-[9px] pl-5 align-top font-normal">Q</th>
            </tr>
          </thead>
          <tbody>
            {notches.map(([freq, gain, q], index) => (
              <tr key={index} className="h-[26px] align-top">
                <td className="leading-[19px]">Notch {index + 1}</td>
                <td><Stepper label={`Notch ${index + 1} frequency`} value={freq} /></td>
                <td><Stepper label={`Notch ${index + 1} gain`} value={gain} /></td>
                <td><Stepper label={`Notch ${index + 1} Q`} value={q} /></td>
              </tr>
            ))}
          </tbody>
        </table>
      </div>
    </div>
    <div className="ml-[157px] h-[10px] shrink-0 rounded-l-[3px] bg-[#b8b8b8]" />
    <button className="mt-2 h-[22px] w-[115px] shrink-0 bg-[#343434] text-[11px]">Cancel</button>
  </section>
);

const StatusBar = () => (
  <footer className="flex h-[18px] shrink-0 overflow-hidden border-t border-[#888] bg-[#d8d8d8] leading-[24px] text-[#222]">
    <span className="w-[79px] border-r border-[#888] pl-[3px]">84/198MB</span>
    <span className="w-[56px] border-r border-[#888] pl-1">48000 Hz</span>
    <span className="w-[10px] border-r border-[#888]" />
    <span className="w-[39px] border-r border-[#888] pl-1">Int32L</span>
    <span className="flex w-[204px] gap-[7px] border-r border-[#888] pl-1 font-['Liberation_Mono',monospace] text-[#7c78cc]">
      <span>0000 0000</span>
      <span>0000 0000</span>
      <span>0000 0000</span>
    </span>
    <span className="w-[264px] border-r border-[#888] pl-1 whitespace-nowrap">Peak input before clipping 120 dB SPL (uncalibrated)</span>
    <span className="flex-1 border-r border-[#888]" />
    <span className="w-[205px]" />
  </footer>
);

export default function App() {
  return (
    <div className="flex h-screen flex-col overflow-hidden bg-white font-['Liberation_Sans',Arial,sans-serif] text-[11px]">
      <TopBars />
      <main className="relative flex min-h-0 flex-1 bg-linear-to-b from-[#fbfbfb] via-[#e6e6e6] to-[#d3d3d3]">
        <Sidebar />
        <GraphArea />
        <AcousticEditor />
      </main>
      <StatusBar />
    </div>
  );
}
